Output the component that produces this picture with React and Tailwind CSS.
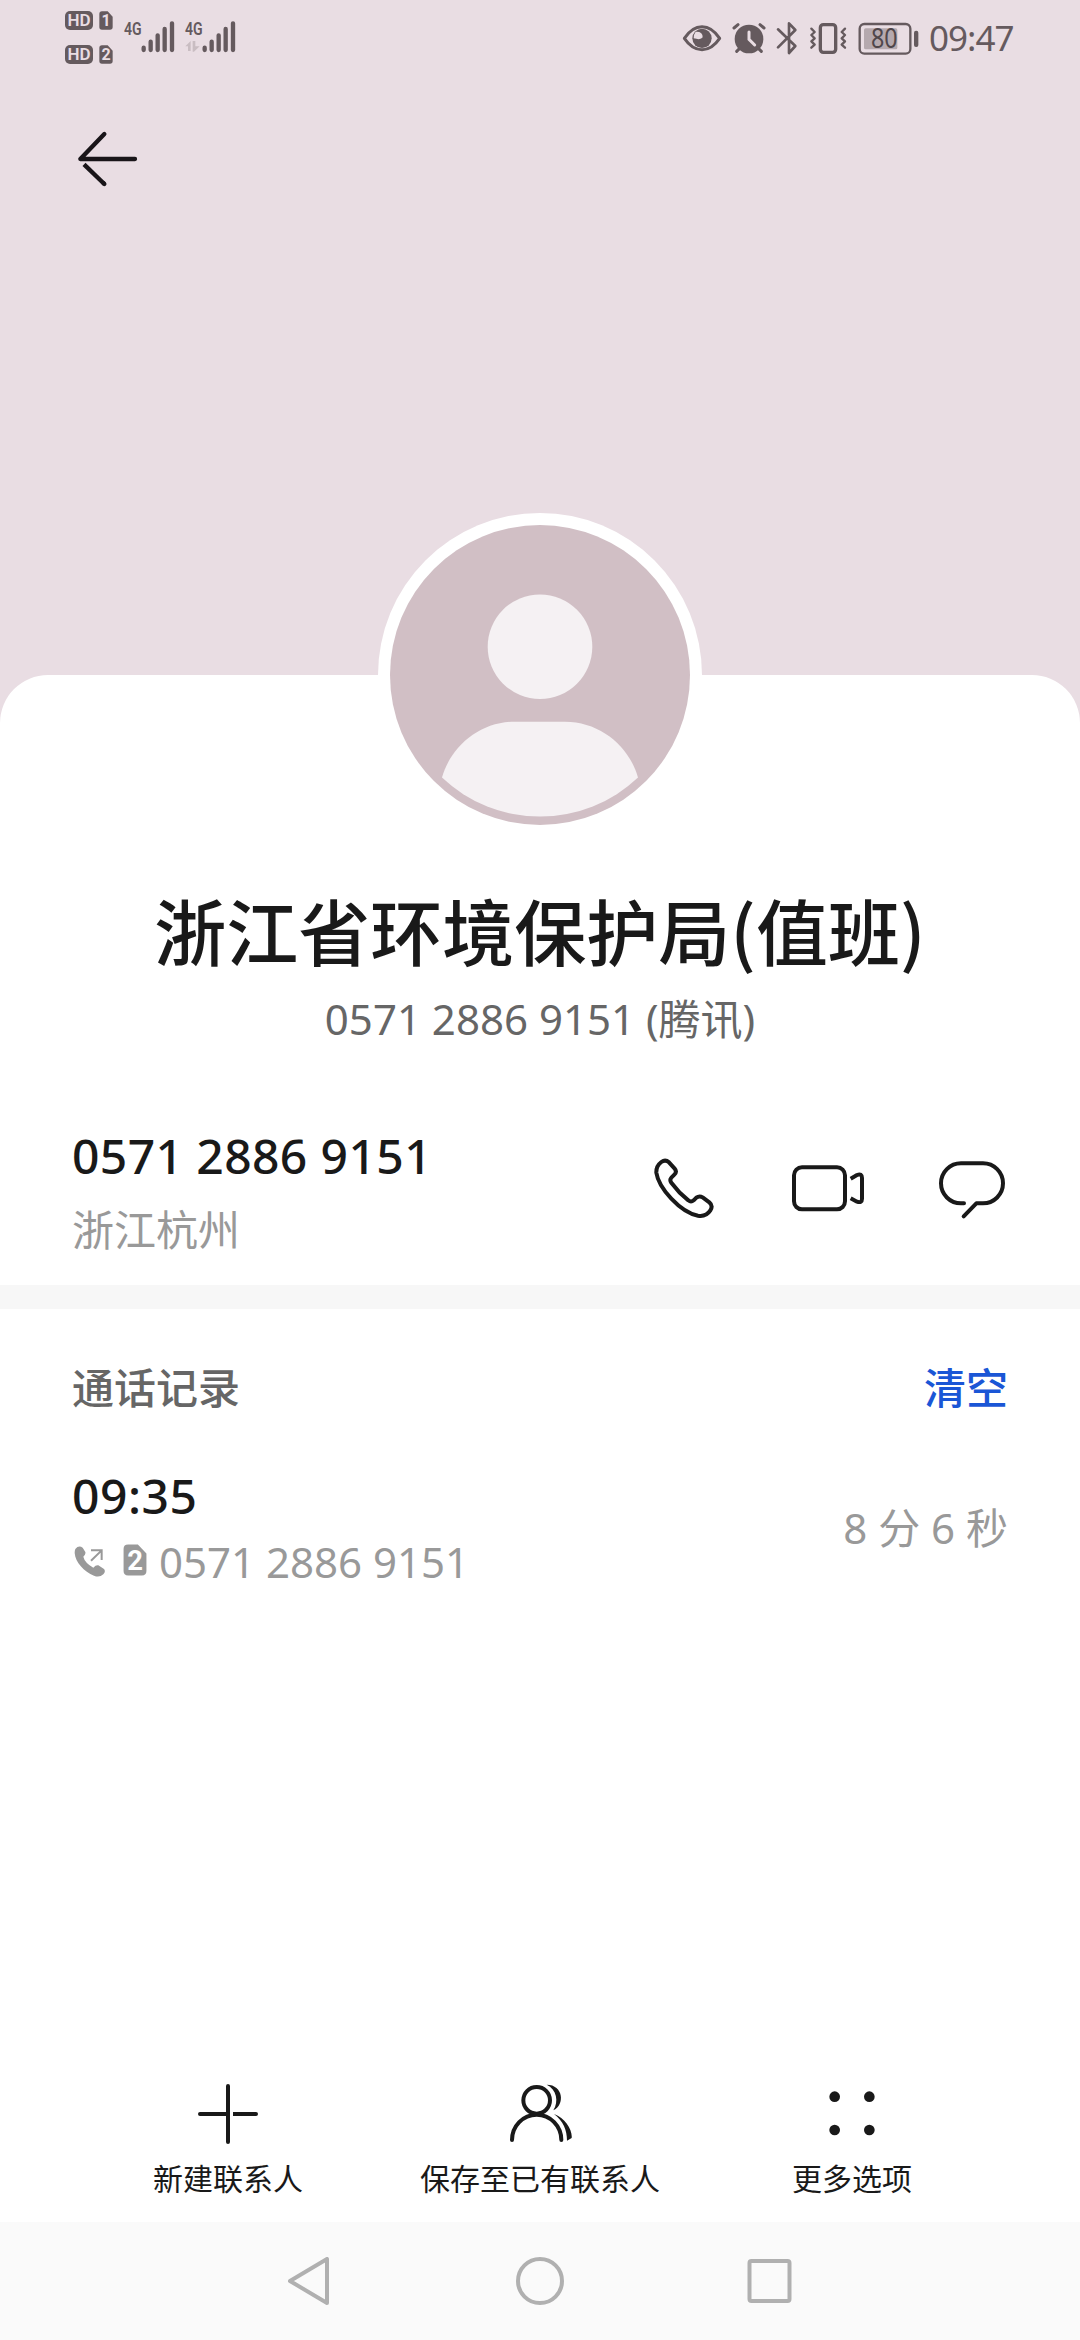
const contact = {
  name: '浙江省环境保护局(值班)',
  number: '0571 2886 9151',
  carrier: '腾讯',
  region: '浙江杭州',
}

const calls = [
  { time: '09:35', sim: '2', number: '0571 2886 9151', duration: '8 分 6 秒' },
]

function SimRow({ sim }) {
  return (
    <div className="flex h-[19px] items-center gap-[6px]">
      <span className="flex h-[19px] w-7 items-center justify-center rounded-[5px] bg-[#655a5e] font-['Roboto',sans-serif] text-[17px] leading-none font-semibold text-[#e9dde3]">HD</span>
      <SimCard sim={sim} className="h-[19px] w-[14px]" fill="#655a5e" color="#e9dde3" />
    </div>
  )
}

function SimCard({ sim, className, fill, color }) {
  return (
    <svg viewBox="0 0 42 57" className={className} preserveAspectRatio="none">
      <path d="M8 1H26L41 17V48Q41 56 33 56H9Q1 56 1 48V9Q1 1 9 1Z" fill={fill} />
      <text x="21" y="46" textAnchor="middle" fontFamily="Roboto, sans-serif" fontSize="48" fontWeight="700" fill={color}>{sim}</text>
    </svg>
  )
}

function Signal({ data }) {
  return (
    <svg viewBox="250 40 156 120" className="h-10 w-[52px]">
      <text x="253" y="106" textLength="53" lengthAdjust="spacingAndGlyphs" fontFamily="Roboto, sans-serif" fontSize="54" fontWeight="600" fill="#655a5e">4G</text>
      <g stroke="#655a5e" strokeWidth="13" strokeLinecap="round">
        <path d="M312 144V151M333 126V151M354 107V151M375 88V151M397 71V151" />
      </g>
      {data && (
        <path d="M254 140L270 124V154H262V140ZM276 124H284V140H297L280 156H276Z" fill="#c9bdc2" />
      )}
    </svg>
  )
}

function StatusBar() {
  return (
    <div className="flex h-[76px] items-start justify-between pr-[66px] pl-[65px]">
      <div className="flex">
        <div className="flex flex-col gap-[15px] pt-[11px]">
          <SimRow sim="1" />
          <SimRow sim="2" />
        </div>
        <div className="ml-[10px] flex gap-[9px] pt-[13px]">
          <Signal />
          <Signal data />
        </div>
      </div>
      <div className="flex items-center pt-[18px]">
        <svg viewBox="60 50 725 120" className="h-10 w-[241.7px]">
          <g fill="none" stroke="#655a5e" strokeWidth="8" strokeLinejoin="round" strokeLinecap="round">
            <path d="M73 111Q96 76 126 76T179 111Q156 145 126 145T73 111Z" strokeWidth="9" />
            <path d="M354 84L406 134L387 155V66L406 86L354 138" />
            <path d="M222 80L234 70M312 80L300 70M230 150L242 138M304 150L292 138" strokeWidth="9" />
            <rect x="481" y="70" width="46" height="83" rx="9" strokeWidth="10" />
            <path d="M454 82L464 92L454 101L464 111L454 120L464 130L454 139" strokeWidth="7" />
            <path d="M555 82L545 92L555 101L545 111L555 120L545 130L555 139" strokeWidth="7" />
            <rect x="599" y="68" width="152" height="89" rx="14" strokeWidth="7" />
          </g>
          <circle cx="126" cy="111" r="29" fill="#655a5e" />
          <path d="M107 91Q129 90 128 108Q123 117 101 111Q101 98 107 91Z" fill="#e9dde3" />
          <circle cx="267" cy="113" r="43" fill="#655a5e" />
          <path d="M267 92V114L284 131" fill="none" stroke="#e9dde3" strokeWidth="9" strokeLinecap="round" />
          <rect x="612" y="81" width="100" height="63" rx="5" fill="#b5a9ae" />
          <text x="673" y="140" textAnchor="middle" textLength="80" lengthAdjust="spacingAndGlyphs" fontFamily="Noto Sans, sans-serif" fontSize="79" fill="#4f464a">80</text>
          <rect x="762" y="88" width="13" height="49" rx="6" fill="#655a5e" />
        </svg>
        <span className="ml-[7px] w-[85px] font-['Noto_Sans',sans-serif] text-[35px] leading-10 tracking-[-1px] text-[#655a5e]">09:47</span>
      </div>
    </div>
  )
}

function Avatar() {
  return (
    <div className="-mt-[162px] size-[324px] self-center rounded-full bg-white p-3">
      <svg viewBox="-150 -150 300 300" className="size-[300px]">
        <circle r="150" fill="#d1bfc5" />
        <circle cy="-28.3" r="52.3" fill="#f5f1f3" />
        <path d="M-25 46.7H25C60 46.7 89 71 98 102.5A142.3 142.3 0 0 1 -98 102.5C-89 71 -60 46.7 -25 46.7Z" fill="#f5f1f3" />
      </svg>
    </div>
  )
}

function ContactActions() {
  return (
    <div className="flex items-center text-[#191919]">
      <svg viewBox="102 107 180 200" className="h-[66.7px] w-[60px]" fill="none" stroke="currentColor" strokeWidth="12" strokeLinejoin="round">
        <path d="M124 128Q136 119 147 129L164 148Q172 157 163 166L154 175Q148 182 154 190Q176 220 205 243Q213 250 221 243L229 235Q238 228 248 234L268 249Q280 259 271 273Q258 293 234 289C180 278 116 206 109 160Q108 140 124 128Z" />
      </svg>
      <svg viewBox="516 107 216 200" className="ml-[78px] h-[66.7px] w-[72px]" fill="none" stroke="currentColor" strokeWidth="12" strokeLinejoin="round">
        <rect x="522" y="144" width="153" height="126" rx="24" />
        <path d="M692 178L711 167Q726 161 726 176V238Q726 252 711 247L692 237" />
      </svg>
      <svg viewBox="957 107 198 200" className="ml-[75px] h-[66.7px] w-[66px]" fill="none" stroke="currentColor" strokeWidth="12" strokeLinejoin="round" strokeLinecap="round">
        <path d="M1032 252H1023A60 60 0 0 1 1023 132H1089A60 60 0 0 1 1089 252H1069L1031 291" />
      </svg>
    </div>
  )
}

function CallRow({ call }) {
  return (
    <div className="flex items-center justify-between px-[72px]">
      <div>
        <div className="h-[64px] font-['Noto_Sans',sans-serif] text-[48px] leading-[64px] font-medium tracking-[0.5px] text-[#191919]">{call.time}</div>
        <div className="mt-1 flex h-[60px] items-start">
          <svg viewBox="102 610 96 98" className="mt-[13px] ml-[2px] h-[32.7px] w-8">
            <path d="M106 622Q116 610 128 618L136 631Q138 638 130 645Q134 663 160 678Q168 669 175 671L192 682Q198 689 190 698Q178 709 162 702C132 690 106 662 104 634Q104 627 106 622Z" fill="#999" />
            <path d="M153 626H185V655M185 626L153 657" fill="none" stroke="#999" strokeWidth="6" />
          </svg>
          <SimCard sim={call.sim} className="mt-[12px] ml-[17px] h-8 w-6" fill="#999" color="#fff" />
          <span className="ml-3 font-['Noto_Sans',sans-serif] text-[42px] leading-[60px] text-[#999]">{call.number}</span>
        </div>
      </div>
      <span className="font-['Noto_Sans','Noto_Sans_CJK_SC',sans-serif] text-[42px] leading-[60px] text-[#999]">{call.duration}</span>
    </div>
  )
}

function BottomAction({ label, children }) {
  return (
    <button className="flex w-[312px] flex-col items-center">
      <svg viewBox="-96 -96 192 192" className="size-16 text-[#191919]" fill="none" stroke="currentColor" strokeWidth="12" strokeLinecap="round">
        {children}
      </svg>
      <span className="mt-[9px] h-[45px] text-[30px] leading-[44px] whitespace-nowrap text-[#191919]">{label}</span>
    </button>
  )
}

function NavBar() {
  return (
    <nav className="flex h-[118px] items-center justify-center gap-[180px] bg-[#fafafa]">
      <svg viewBox="0 0 48 48" className="size-12" fill="none" stroke="#b0b0b0" strokeWidth="4" strokeLinejoin="round">
        <path d="M2 24L39 2V46Z" />
      </svg>
      <svg viewBox="0 0 48 48" className="size-12" fill="none" stroke="#b0b0b0" strokeWidth="4">
        <circle cx="24" cy="24" r="22" />
      </svg>
      <svg viewBox="0 0 48 48" className="size-12" fill="none" stroke="#b0b0b0" strokeWidth="4">
        <rect x="5.5" y="4" width="40" height="40" rx="2" />
      </svg>
    </nav>
  )
}

export default function App() {
  return (
    <div className="flex h-[2340px] w-[1080px] flex-col overflow-hidden bg-[#e9dde3] font-['Noto_Sans_CJK_SC',sans-serif]">
      <header className="h-[675px]">
        <StatusBar />
        <div className="flex h-[166px] items-center px-[75px]">
          <svg viewBox="105 390 192 174" className="h-[58px] w-16" fill="none" stroke="#191519" strokeWidth="13" strokeLinecap="round" strokeLinejoin="round">
            <path d="M285 477H121L193 402" />
            <path d="M132 493L193 552" strokeLinecap="butt" />
            <path d="M190 549L193 552" />
          </svg>
        </div>
      </header>

      <main className="flex flex-1 flex-col rounded-t-[48px] bg-white">
        <Avatar />
        <h1 className="mt-[44px] h-24 text-center text-[72px] leading-[96px] font-medium text-[#191919]">{contact.name}</h1>
        <p className="mt-3 h-[60px] text-center font-['Noto_Sans','Noto_Sans_CJK_SC',sans-serif] text-[42px] leading-[60px] text-[#666]">
          {contact.number} ({contact.carrier})
        </p>

        <div className="mt-[75px] flex h-[161px] items-start justify-between pr-[75px] pl-[72px]">
          <div>
            <div className="h-16 font-['Noto_Sans',sans-serif] text-[48px] leading-[64px] font-medium tracking-[0.4px] text-[#191919]">{contact.number}</div>
            <div className="mt-[10px] h-[60px] text-[42px] leading-[60px] text-[#999]">{contact.region}</div>
          </div>
          <div className="pt-[31px]">
            <ContactActions />
          </div>
        </div>
        <div className="h-6 bg-[#f7f7f7]" />

        <div className="mt-[47px] flex h-[60px] justify-between px-[72px] text-[42px] leading-[60px] font-medium">
          <h2 className="text-[#666]">通话记录</h2>
          <button className="text-[#1a56d6]">清空</button>
        </div>
        <div className="mt-[48px]">
          {calls.map((call) => (
            <CallRow key={call.time} call={call} />
          ))}
        </div>

        <div className="mt-auto flex justify-center pb-[22px]">
          <BottomAction label="新建联系人">
            <path d="M0 -84V84M-84 0H0M22 0H84" />
            <path d="M15 0H40" strokeLinecap="butt" />
          </BottomAction>
          <BottomAction label="保存至已有联系人">
            <circle cx="-10" cy="-41" r="40" />
            <path d="M-84 78A74 76 0 0 1 64 78" />
            <g fill="currentColor" stroke="none">
              <path d="M20 -88C70 -88 76 -28 40 -11C57 -38 50 -74 20 -88Z" />
              <path d="M42 0C76 12 98 48 95 72L81 80C81 48 70 22 42 0Z" />
            </g>
          </BottomAction>
          <BottomAction label="更多选项">
            <g fill="currentColor" stroke="none">
              <circle cx="-52" cy="-52" r="16" />
              <circle cx="52" cy="-52" r="16" />
              <circle cx="-52" cy="48" r="16" />
              <circle cx="52" cy="48" r="16" />
            </g>
          </BottomAction>
        </div>
      </main>

      <NavBar />
    </div>
  )
}
